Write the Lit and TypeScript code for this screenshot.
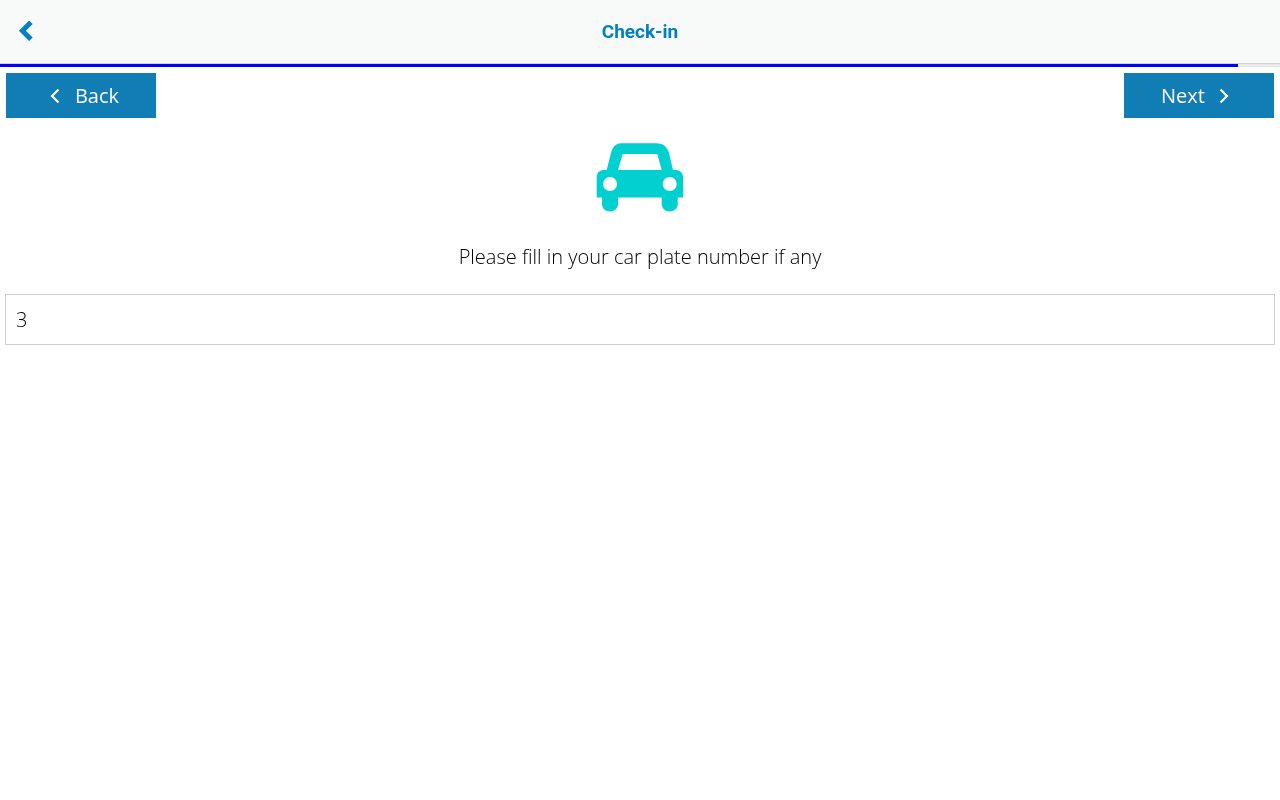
import { LitElement, html, css } from 'lit';
import { customElement, state } from 'lit/decorators.js';

const chevron = (points: string) => html`
  <svg viewBox="0 0 12 18" aria-hidden="true"><polyline points=${points}></polyline></svg>
`;

@customElement('app-root')
export class AppRoot extends LitElement {
  @state() plate = '3';
  @state() progress = 96.72;

  static styles = css`
    :host {
      display: block;
      min-height: 800px;
      background: #fff;
      font-family: 'Open Sans', 'Liberation Sans', sans-serif;
    }

    /* own layer: text gets greyscale antialiasing, as in the reference */
    .title,
    .nav,
    .content {
      will-change: opacity;
    }

    .topbar {
      display: grid;
      grid-template-columns: 52px 1fr 52px;
      align-items: center;
      height: 63px;
      background: #f8f9f9;
      border-bottom: 1px solid #d2d2d2;
    }

    .topbar .home {
      display: flex;
      padding: 0 0 0 18px;
      background: none;
      border: none;
    }

    .home svg {
      width: 16px;
      height: 22px;
      fill: none;
      stroke: #0280c0;
      stroke-width: 4;
    }

    .title {
      margin: 0;
      text-align: center;
      font: 700 19px Roboto, sans-serif;
      color: #0280c0;
    }

    .track {
      height: 3px;
      background: #e9e9e9;
    }

    .bar {
      height: 100%;
      background: #0000ff;
    }

    .nav {
      display: flex;
      justify-content: space-between;
      padding: 6px 6px 0;
    }

    .nav button {
      display: flex;
      align-items: center;
      justify-content: center;
      width: 150px;
      height: 45px;
      padding: 0;
      border: none;
      background: #117db5;
      color: #fff;
      font: 400 20px 'Open Sans', sans-serif;
    }

    .nav .prev {
      gap: 14px;
      padding-left: 6px;
    }

    .nav .next {
      gap: 13px;
      padding-right: 7px;
    }

    .nav svg {
      width: 12px;
      height: 18px;
      fill: none;
      stroke: #fff;
      stroke-width: 2.2;
    }

    .content {
      display: flex;
      flex-direction: column;
      align-items: center;
      padding: 25px 5px 0;
    }

    .car {
      display: block;
      width: 88px;
      height: 69px;
      fill: #00d0d0;
    }

    .prompt {
      margin: 30px 0 22px;
      font-size: 20px;
      font-weight: 300;
      line-height: 30px;
      color: #000;
    }

    input {
      box-sizing: border-box;
      width: 100%;
      height: 51px;
      padding: 0 10px;
      border: 1px solid #cfcfcf;
      outline: none;
      background: transparent;
      font: 300 20px 'Open Sans', sans-serif;
      color: #000;
    }
  `;

  render() {
    return html`
      <header class="topbar">
        <button class="home">${chevron('10,1 3,8 10,15')}</button>
        <h1 class="title">Check-in</h1>
        <span></span>
      </header>
      <div class="track"><div class="bar" style="width: ${this.progress}%"></div></div>
      <div class="nav">
        <button class="prev">${chevron('9.5,2.5 3,9 9.5,15.5')}<span>Back</span></button>
        <button class="next"><span>Next</span>${chevron('2.5,2.5 9,9 2.5,15.5')}</button>
      </div>
      <main class="content">
        <svg class="car" viewBox="0 0 88 69" aria-hidden="true">
          <path
            fill-rule="evenodd"
            d="M25 0.3H61C67 0.3 71 4 73 10L77 27H80C84 27 87 30 87 34V54.5H81.7V61C81.7 65.5 78 68.5 73.7 68.5C69.4 68.5 65.7 65.5 65.7 61V54.5H22V61C22 65.5 18.3 68.5 14 68.5C9.7 68.5 6 65.5 6 61V54.5H0.7V34C0.7 30 3.7 27 7.7 27H10.7L15 10C16.5 4 20 0.3 25 0.3ZM26.7 11L22 27H65.7L61.3 11ZM14 34A7 7 0 1 0 14 48A7 7 0 1 0 14 34ZM73.7 34A7 7 0 1 0 73.7 48A7 7 0 1 0 73.7 34Z"
          ></path>
        </svg>
        <p class="prompt">Please fill in your car plate number if any</p>
        <input type="text" .value=${this.plate} />
      </main>
    `;
  }
}
